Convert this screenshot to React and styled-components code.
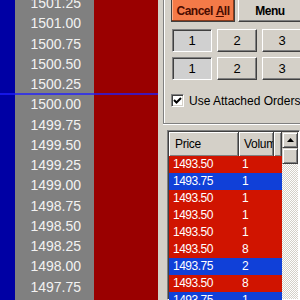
import React from 'react';
import styled, { createGlobalStyle } from 'styled-components';

const GlobalStyle = createGlobalStyle`
  html, body { margin: 0; padding: 0; width: 300px; height: 300px; overflow: hidden; background: #d4d0c8; }
  #root { width: 300px; height: 300px; }
`;

const Screen = styled.div`
  display: flex;
  width: 300px;
  height: 300px;
  overflow: hidden;
  background: #d4d0c8;
  font-family: "Liberation Sans", Arial, sans-serif;
`;

/* ---------- price ladder ---------- */
const Ladder = styled.div`
  flex: none;
  width: 158px;
  display: flex;
  flex-direction: column;
  margin-top: -7px;
`;

const LadderRow = styled.div`
  display: flex;
  flex: none;
  height: 20.25px;
  position: ${(p) => (p.$last ? 'relative' : 'static')};
  &::after {
    content: '';
    display: ${(p) => (p.$last ? 'block' : 'none')};
    position: absolute;
    left: 0;
    right: 0;
    bottom: -1px;
    height: 2px;
    background: rgba(30, 30, 255, 0.72);
  }
`;

const BidCell = styled.div`
  width: 15px;
  background: #0000a4;
`;

const PriceCell = styled.div`
  width: 79px;
  box-sizing: border-box;
  padding-right: 13px;
  background: #808080;
  color: #f2f2f2;
  font-size: 14px;
  line-height: 20.25px;
  text-align: right;
`;

const AskCell = styled.div`
  width: 64px;
  background: #9a0000;
`;

/* ---------- right panel ---------- */
const Panel = styled.div`
  flex: 1;
  min-width: 0;
  display: flex;
  flex-direction: column;
`;

const TopSection = styled.div`
  margin-left: 5px;
  padding: 0 0 16px 7px;
  border-left: 1px solid #808080;
  border-bottom: 1px solid #808080;
  box-shadow: inset 1px 0 0 #fff, 0 1px 0 #fff;
  display: flex;
  flex-direction: column;
`;

const ActionRow = styled.div`
  display: flex;
  gap: 3px;
  margin-top: -3px;
`;

const ActionButton = styled.div`
  flex: none;
  width: 64px;
  height: 25px;
  box-sizing: border-box;
  display: flex;
  align-items: center;
  justify-content: center;
  padding-top: 2px;
  font-size: 12px;
  font-weight: bold;
  letter-spacing: -0.5px;
  background: ${(p) => (p.$alert ? '#f47a48' : '#d4d0c8')};
  color: ${(p) => (p.$alert ? '#4a0c00' : '#000')};
  border: 1px solid;
  border-color: ${(p) => (p.$alert ? '#404040' : '#fff #404040 #404040 #fff')};
  box-shadow: ${(p) =>
    p.$alert
      ? 'inset -1px -1px 0 #8a3a1a, inset 1px 1px 0 #ffb08a'
      : 'inset -1px -1px 0 #808080'};
  u { text-decoration: underline; }
`;

const NumberGrid = styled.div`
  display: grid;
  grid-template-columns: repeat(3, 40px);
  grid-auto-rows: 23px;
  gap: 5px;
  margin: 7px 0 0 1px;
`;

const NumberButton = styled.div`
  box-sizing: border-box;
  display: flex;
  align-items: center;
  justify-content: center;
  font-size: 13px;
  color: #000;
  background: ${(p) => (p.$on ? '#d0d0d0' : '#d4d0c8')};
  border: 1px solid;
  border-color: ${(p) => (p.$on ? '#808080 #fff #fff #808080' : '#fff #404040 #404040 #fff')};
  box-shadow: ${(p) => (p.$on ? 'inset 1px 1px 0 #404040' : 'inset -1px -1px 0 #808080')};
`;

const CheckRow = styled.label`
  display: flex;
  align-items: center;
  gap: 5px;
  height: 13px;
  margin-top: 14px;
  font-size: 12px;
  color: #000;
  white-space: nowrap;
`;

const CheckBox = styled.span`
  flex: none;
  width: 13px;
  height: 13px;
  box-sizing: border-box;
  background: #fff;
  border: 1px solid;
  border-color: #808080 #fff #fff #808080;
  box-shadow: inset 1px 1px 0 #404040, inset -1px -1px 0 #d4d0c8;
  display: flex;
  align-items: center;
  justify-content: center;
`;

/* ---------- order list ---------- */
const ListView = styled.div`
  flex: 1;
  min-height: 0;
  margin: 6px 0 0 9px;
  display: flex;
  border: 1px solid;
  border-color: #808080 #fff #fff #808080;
  box-shadow: inset 1px 1px 0 #404040;
  padding: 1px 1px 0 1px;
  background: #fff;
`;

const TableArea = styled.div`
  flex: 1;
  min-width: 0;
  display: flex;
  flex-direction: column;
  background: #fff;
`;

const cols = '70px 35px 1fr';

const HeaderRow = styled.div`
  display: grid;
  grid-template-columns: ${cols};
  height: 24px;
  flex: none;
`;

const HeaderCell = styled.div`
  box-sizing: border-box;
  padding-left: ${(p) => p.$pad}px;
  display: flex;
  align-items: center;
  overflow: hidden;
  white-space: nowrap;
  font-size: 12px;
  letter-spacing: -0.3px;
  color: #000;
  background: #d4d0c8;
  border-right: 1px solid #404040;
  box-shadow: inset 1px 1px 0 #fff, inset -1px -1px 0 #808080;
`;

const OrderRow = styled.div`
  display: grid;
  grid-template-columns: ${cols};
  height: 17px;
  flex: none;
  background: ${(p) => (p.$side === 'buy' ? '#1040d8' : '#d01400')};
  color: #fff;
  font-size: 12px;
  letter-spacing: -0.5px;
  line-height: 17px;
`;

const OrderCell = styled.div`
  padding-left: ${(p) => p.$pad}px;
  white-space: nowrap;
  overflow: hidden;
`;

const ScrollBar = styled.div`
  flex: none;
  width: 16px;
  display: flex;
  flex-direction: column;
  background-color: #fff;
  background-image: repeating-conic-gradient(#d4d0c8 0 25%, #fff 0 50%);
  background-size: 2px 2px;
`;

const ScrollPart = styled.div`
  flex: none;
  height: 16px;
  box-sizing: border-box;
  background: #d4d0c8;
  border: 1px solid;
  border-color: #d4d0c8 #404040 #404040 #d4d0c8;
  box-shadow: inset 1px 1px 0 #fff, inset -1px -1px 0 #808080;
  display: flex;
  align-items: center;
  justify-content: center;
`;

const ladderPrices = [
  '1501.25', '1501.00', '1500.75', '1500.50', '1500.25', '1500.00',
  '1499.75', '1499.50', '1499.25', '1499.00', '1498.75', '1498.50',
  '1498.25', '1498.00', '1497.75', '1497.50',
];

const orders = [
  ['1493.50', '1', 'sell'],
  ['1493.75', '1', 'buy'],
  ['1493.50', '1', 'sell'],
  ['1493.50', '1', 'sell'],
  ['1493.50', '1', 'sell'],
  ['1493.50', '8', 'sell'],
  ['1493.75', '2', 'buy'],
  ['1493.50', '8', 'sell'],
  ['1493.75', '1', 'buy'],
];

export default function App() {
  return (
    <>
      <GlobalStyle />
      <Screen>
        <Ladder>
          {ladderPrices.map((p) => (
            <LadderRow key={p} $last={p === '1500.25'}>
              <BidCell />
              <PriceCell>{p}</PriceCell>
              <AskCell />
            </LadderRow>
          ))}
        </Ladder>
        <Panel>
          <TopSection>
            <ActionRow>
              <ActionButton $alert>
                Cancel&nbsp;<u>A</u>ll
              </ActionButton>
              <ActionButton>Menu</ActionButton>
            </ActionRow>
            <NumberGrid>
              <NumberButton $on>1</NumberButton>
              <NumberButton>2</NumberButton>
              <NumberButton>3</NumberButton>
              <NumberButton $on>1</NumberButton>
              <NumberButton>2</NumberButton>
              <NumberButton>3</NumberButton>
            </NumberGrid>
            <CheckRow>
              <CheckBox>
                <svg width="9" height="9" viewBox="0 0 9 9">
                  <path d="M1 4 L3.5 6.5 L8 2" fill="none" stroke="#000" strokeWidth="2" />
                </svg>
              </CheckBox>
              Use Attached Orders
            </CheckRow>
          </TopSection>
          <ListView>
            <TableArea>
              <HeaderRow>
                <HeaderCell $pad={6}>Price</HeaderCell>
                <HeaderCell $pad={5}>Volume</HeaderCell>
                <HeaderCell $pad={0} />
              </HeaderRow>
              {orders.map(([price, vol, side], i) => (
                <OrderRow key={i} $side={side}>
                  <OrderCell $pad={4}>{price}</OrderCell>
                  <OrderCell $pad={3}>{vol}</OrderCell>
                  <OrderCell $pad={0} />
                </OrderRow>
              ))}
            </TableArea>
            <ScrollBar>
              <ScrollPart>
                <svg width="7" height="4" viewBox="0 0 7 4">
                  <polygon points="3.5,0 7,4 0,4" fill="#000" />
                </svg>
              </ScrollPart>
              <ScrollPart />
            </ScrollBar>
          </ListView>
        </Panel>
      </Screen>
    </>
  );
}
